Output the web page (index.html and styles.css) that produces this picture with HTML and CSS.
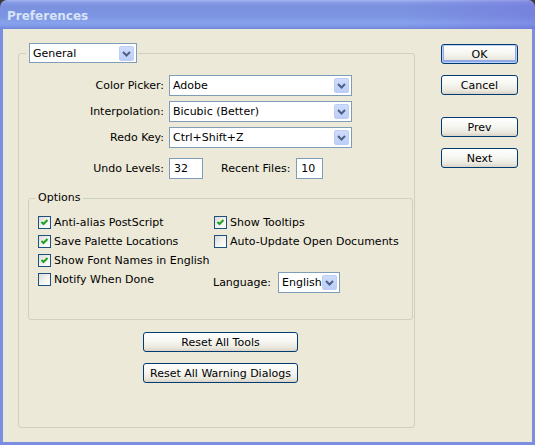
FILE: index.html
```html
<!DOCTYPE html>
<html lang="en">
<head>
  <meta charset="UTF-8" />
  <title>Preferences</title>
  <meta name="viewport" content="width=device-width, initial-scale=1.0" />
  <link rel="stylesheet" href="styles.css">
</head>
<body>

  <div class="window">
    <div class="titlebar">Preferences</div>

    <div class="client">
      <fieldset class="group main">
        <legend class="combo-legend">
          <div class="combo general">
            <span class="value">General</span>
            <span class="drop"><svg width="11" height="11" viewBox="0 0 11 11"><path d="M2 4 L5.5 7.5 L9 4" /></svg></span>
          </div>
        </legend>

        <div class="fields">
          <label>Color Picker:</label>
          <div class="combo">
            <span class="value">Adobe</span>
            <span class="drop"><svg width="11" height="11" viewBox="0 0 11 11"><path d="M2 4 L5.5 7.5 L9 4" /></svg></span>
          </div>

          <label>Interpolation:</label>
          <div class="combo">
            <span class="value">Bicubic (Better)</span>
            <span class="drop"><svg width="11" height="11" viewBox="0 0 11 11"><path d="M2 4 L5.5 7.5 L9 4" /></svg></span>
          </div>

          <label>Redo Key:</label>
          <div class="combo">
            <span class="value">Ctrl+Shift+Z</span>
            <span class="drop"><svg width="11" height="11" viewBox="0 0 11 11"><path d="M2 4 L5.5 7.5 L9 4" /></svg></span>
          </div>

          <label class="spaced">Undo Levels:</label>
          <div class="inline spaced">
            <div class="edit undo">32</div>
            <label class="recent">Recent Files:</label>
            <div class="edit files">10</div>
          </div>
        </div>

        <fieldset class="group options">
          <legend>Options</legend>
          <div class="opts">
            <div class="col">
              <div class="check on"><span class="box"><svg width="11" height="11" viewBox="0 0 11 11"><path d="M2.5 5 L4.5 7 L8.5 3" /></svg></span>Anti-alias PostScript</div>
              <div class="check on"><span class="box"><svg width="11" height="11" viewBox="0 0 11 11"><path d="M2.5 5 L4.5 7 L8.5 3" /></svg></span>Save Palette Locations</div>
              <div class="check on"><span class="box"><svg width="11" height="11" viewBox="0 0 11 11"><path d="M2.5 5 L4.5 7 L8.5 3" /></svg></span>Show Font Names in English</div>
              <div class="check"><span class="box"></span>Notify When Done</div>
            </div>
            <div class="col">
              <div class="check on"><span class="box"><svg width="11" height="11" viewBox="0 0 11 11"><path d="M2.5 5 L4.5 7 L8.5 3" /></svg></span>Show Tooltips</div>
              <div class="check"><span class="box"></span>Auto-Update Open Documents</div>
              <div class="lang">
                <label>Language:</label>
                <div class="combo small">
                  <span class="value">English</span>
                  <span class="drop"><svg width="11" height="11" viewBox="0 0 11 11"><path d="M2 4 L5.5 7.5 L9 4" /></svg></span>
                </div>
              </div>
            </div>
          </div>
        </fieldset>

        <div class="resets">
          <button class="btn wide">Reset All Tools</button>
          <button class="btn wide">Reset All Warning Dialogs</button>
        </div>
      </fieldset>

      <div class="side">
        <button class="btn default">OK</button>
        <button class="btn">Cancel</button>
        <button class="btn prev">Prev</button>
        <button class="btn">Next</button>
      </div>
    </div>
  </div>

</body>
</html>
```

FILE: styles.css
```css
body {
  margin: 0;
  background: #3b3b3b;
  font-family: 'DejaVu Sans', 'Liberation Sans', sans-serif;
  font-size: 11px;
  color: #000;
}
.window {
  width: 535px;
  height: 445px;
  display: flex;
  flex-direction: column;
  border-radius: 7px 7px 0 0;
  overflow: hidden;
}
.titlebar {
  height: 29px;
  flex: none;
  box-sizing: border-box;
  padding: 9px 0 0 7px;
  font-weight: bold;
  font-size: 12px;
  color: #d8e4f8;
  background:
    linear-gradient(90deg, rgba(120, 110, 220, 0) 75%, rgba(110, 100, 215, 0.35) 100%),
    linear-gradient(180deg, #a7b8f1 0, #8a9ee6 2px, #7b91e0 6px, #7c94e2 16px, #87a3ed 23px, #7f99e7 26px, #7286dc 29px);
}
.client {
  flex: 1;
  display: flex;
  align-items: flex-start;
  background: #ece9d8;
  border: 3px solid #7c8ee1;
  border-top: none;
  padding: 14px 0 0 15px;
}

/* group boxes */
.group {
  margin: 0;
  border: 1px solid #d0d0bf;
  border-radius: 3px;
  box-sizing: border-box;
}
.main {
  width: 397px;
  padding: 12px 1px 44px 9px;
}
.combo-legend {
  padding: 0 1px 0 3px;
  margin-left: -2px;
}
.fields {
  display: grid;
  grid-template-columns: 136px 183px;
  column-gap: 5px;
  row-gap: 5px;
  align-items: center;
}
.fields > label {
  text-align: right;
}
.spaced {
  margin-top: 5px;
}
.inline {
  display: flex;
  align-items: center;
}
.recent {
  margin: 0 6px 0 18px;
}

/* controls */
.combo {
  display: flex;
  align-items: center;
  height: 21px;
  box-sizing: border-box;
  border: 1px solid #7f9db9;
  background: white;
}
.combo .value {
  flex: 1;
  padding-left: 3px;
  white-space: nowrap;
}
.combo.general {
  width: 108px;
  height: 20px;
}
.combo.small {
  width: 62px;
}
.drop {
  width: 15px;
  height: 15px;
  margin-right: 2px;
  box-sizing: border-box;
  border: 1px solid #bccdf6;
  border-radius: 2px;
  background: linear-gradient(180deg, #cfdcfc 0%, #bccef8 100%);
  display: flex;
  align-items: center;
  justify-content: center;
}
.drop path {
  fill: none;
  stroke: #4d6185;
  stroke-width: 2;
}
.edit {
  height: 21px;
  box-sizing: border-box;
  border: 1px solid #7f9db9;
  background: white;
  padding: 3px 0 0 4px;
}
.edit.undo {
  width: 34px;
}
.edit.files {
  width: 27px;
}

/* options */
.options {
  width: 385px;
  margin-top: 12px;
  padding: 8px 0 26px 6px;
}
.options legend {
  padding: 0 3px;
  line-height: 14px;
}
.opts {
  display: grid;
  grid-template-columns: 176px auto;
  padding-left: 3px;
}
.check {
  display: flex;
  align-items: center;
  height: 19px;
  gap: 3px;
  white-space: nowrap;
}
.box {
  width: 13px;
  height: 13px;
  box-sizing: border-box;
  border: 1px solid #1c5180;
  background: linear-gradient(135deg, #dcdcd5 0%, #f3f3ef 55%, #fff 100%);
  display: flex;
}
.box path {
  fill: none;
  stroke: #21a121;
  stroke-width: 2;
}
.lang {
  display: flex;
  align-items: center;
  gap: 7px;
  margin: 21px 0 0 -1px;
}

/* buttons */
.btn {
  font: inherit;
  color: #000;
  height: 20px;
  padding: 0;
  box-sizing: border-box;
  border: 1px solid #003c74;
  border-radius: 3px;
  background: linear-gradient(180deg, #ffffff 0%, #f6f6f2 45%, #ebe8de 80%, #d8d3c6 100%);
}
.btn.default {
  box-shadow: inset 0 0 0 1px #bcd0f7, inset 0 -1px 0 2px #8fa9ea;
}
.btn.wide {
  width: 155px;
}
.resets {
  display: flex;
  flex-direction: column;
  align-items: center;
  gap: 11px;
  margin-top: 12px;
}
.side {
  display: flex;
  flex-direction: column;
  gap: 11px;
  margin: 1px 0 0 26px;
}
.side .btn {
  width: 77px;
}
.side .prev {
  margin-top: 11px;
}
```
